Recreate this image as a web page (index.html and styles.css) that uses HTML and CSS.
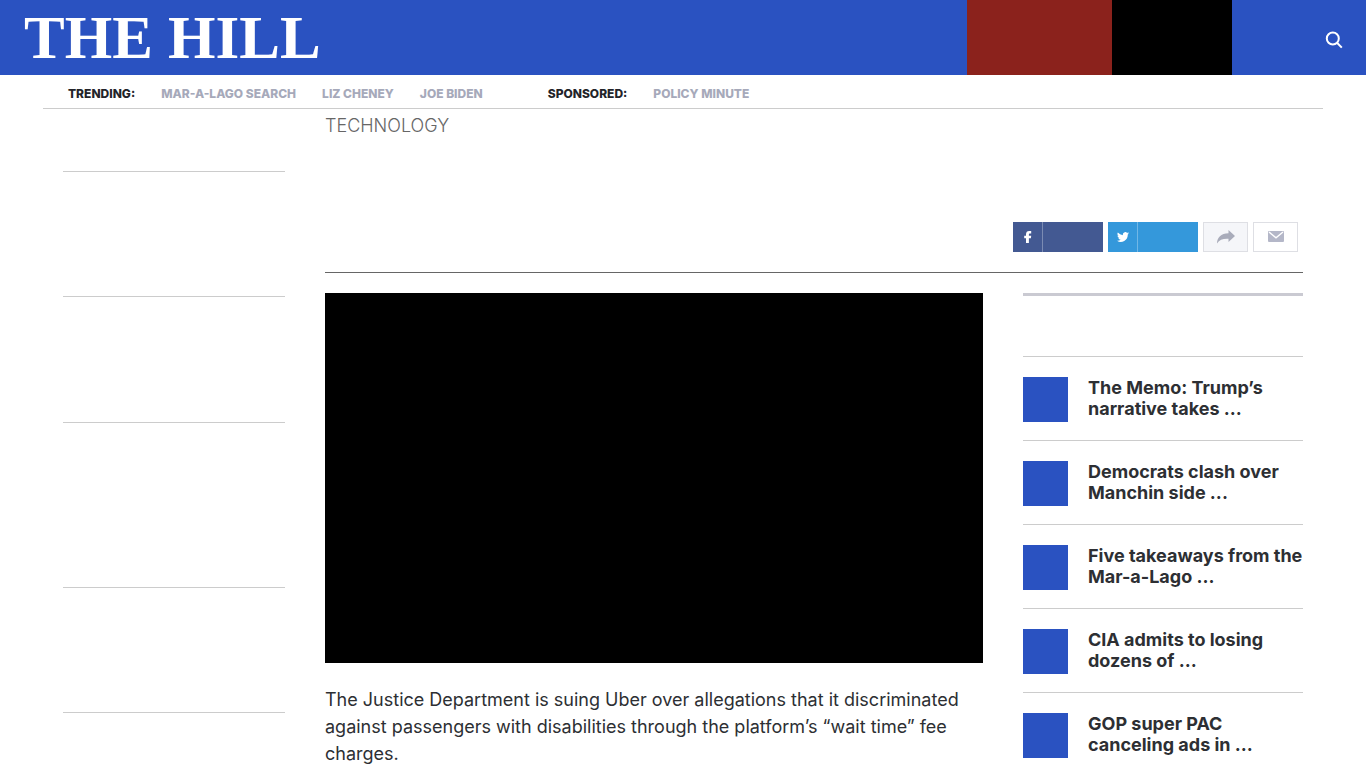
FILE: index.html
```html
<!DOCTYPE html>
<html lang="en">
<head>
<meta charset="utf-8">
<meta name="viewport" content="width=device-width, initial-scale=1">
<title>The Hill</title>
<link rel="stylesheet" href="styles.css">
</head>
<body>
<header class="header">
  <a class="logo" href="#">THE HILL</a>
  <a class="header-block header-red" href="#" aria-label="Watch live"></a>
  <a class="header-block header-black" href="#" aria-label="Subscribe"></a>
  <div class="header-search">
    <button class="search-button" type="button" aria-label="Search">
      <svg width="18" height="18" viewBox="0 0 18 18" fill="none" stroke="currentColor" stroke-width="2"><circle cx="7.8" cy="7.500" r="6"/><path d="M12 11.800l4.800 4.800"/></svg>
    </button>
  </div>
</header>
<div class="container">
  <nav class="trending" aria-label="Trending">
    <div class="trending-group">
      <span class="trending-label">TRENDING:</span>
      <a href="#">MAR-A-LAGO SEARCH</a>
      <a href="#">LIZ CHENEY</a>
      <a href="#">JOE BIDEN</a>
    </div>
    <div class="trending-group">
      <span class="trending-label">SPONSORED:</span>
      <a href="#">POLICY MINUTE</a>
    </div>
  </nav>
  <div class="layout">
    <aside class="rail">
      <div class="rail-item rail-first"></div>
      <div class="rail-item"></div>
      <div class="rail-item rail-third"></div>
      <div class="rail-item rail-tall"></div>
      <div class="rail-item"></div>
    </aside>
    <main class="content">
      <div class="article-head">
        <a class="category" href="#">TECHNOLOGY</a>
        <div class="share">
          <button class="share-button facebook" type="button" aria-label="Share on Facebook">
            <span class="share-icon"><svg width="8" height="13" viewBox="0 0 8 13" fill="currentColor"><path d="M2 12V7.300H.2V4.700H2V3.300C2 1.200 3.200 0 5.200 0h2v2.500H6c-.8 0-1.100.3-1.100 1v1.200h2.300l-.3 2.600h-2V12z"/></svg></span>
          </button>
          <button class="share-button twitter" type="button" aria-label="Share on Twitter">
            <span class="share-icon"><svg width="12" height="12" viewBox="0 0 24 24" fill="currentColor"><path d="M24 4.600a10 10 0 0 1-2.800.8 4.900 4.900 0 0 0 2.200-2.700 9.900 9.900 0 0 1-3.100 1.200 4.900 4.900 0 0 0-8.400 4.500A14 14 0 0 1 1.700 3.200a4.900 4.900 0 0 0 1.500 6.500A4.900 4.900 0 0 1 1 9.100a4.900 4.900 0 0 0 3.900 4.900 5 5 0 0 1-2.200.1 4.900 4.900 0 0 0 4.600 3.400A9.900 9.900 0 0 1 0 19.500 14 14 0 0 0 21.500 7.100 10 10 0 0 0 24 4.600z"/></svg></span>
          </button>
          <button class="share-button more" type="button" aria-label="More sharing options">
            <svg width="20" height="14" viewBox="0 0 20 14" fill="currentColor"><path d="M12.500 0L19 6l-6.500 6V8.800C7 8.500 3.500 9.800 1 13.500 1 7.500 5 3.300 12.500 3.200z"/></svg>
          </button>
          <button class="share-button email" type="button" aria-label="Share by email">
            <svg width="16" height="12" viewBox="0 0 16 12"><rect width="16" height="11" rx="1" fill="currentColor"/><path d="M1 1l7 5.800L15 1" fill="none" stroke="#fff" stroke-width="1.400"/></svg>
          </button>
        </div>
      </div>
      <div class="article-body">
        <article class="article">
          <div class="video"></div>
          <p class="paragraph">The Justice Department is suing Uber over allegations that it discriminated against passengers with disabilities through the platform’s “wait time” fee charges.</p>
        </article>
        <aside class="popular">
          <div class="popular-head"></div>
          <a class="popular-item" href="#"><span class="rank"></span><span class="popular-title">The Memo: Trump’s<br>narrative takes ...</span></a>
          <a class="popular-item" href="#"><span class="rank"></span><span class="popular-title">Democrats clash over<br>Manchin side ...</span></a>
          <a class="popular-item" href="#"><span class="rank"></span><span class="popular-title">Five takeaways from the<br>Mar-a-Lago ...</span></a>
          <a class="popular-item" href="#"><span class="rank"></span><span class="popular-title">CIA admits to losing<br>dozens of ...</span></a>
          <a class="popular-item" href="#"><span class="rank"></span><span class="popular-title">GOP super PAC<br>canceling ads in ...</span></a>
        </aside>
      </div>
    </main>
  </div>
</div>
</body>
</html>
```
FILE: styles.css
```css
* { box-sizing: border-box; }
body {
  margin: 0;
  background: #fff;
  color: #2d2f33;
  font-family: Inter, "Liberation Sans", sans-serif;
}
a { color: inherit; text-decoration: none; }
button { border: 0; padding: 0; cursor: pointer; }
svg { display: block; }

.header {
  display: flex;
  align-items: stretch;
  height: 75px;
  background: #2a52c1;
  color: #fff;
}
.logo {
  margin-right: auto;
  padding-left: 24px;
  font: bold 61px/76px "Liberation Serif", serif;
}
.header-red { width: 145px; background: #8b221c; }
.header-black { width: 120px; background: #000; }
.header-search {
  display: flex;
  align-items: center;
  justify-content: flex-end;
  width: 134px;
  padding: 4px 23px 0 0;
}
.search-button { background: none; color: #fff; }

.container { max-width: 1280px; margin: 0 auto; }
.trending {
  display: flex;
  gap: 65px;
  padding: 11px 25px 6px;
  border-bottom: 1px solid #ccc;
  color: #a6a9ba;
  font-size: 12px;
  font-weight: 800;
  line-height: 16px;
}
.trending-group { display: flex; gap: 26px; }
.trending-label { color: #232429; }

.layout {
  display: grid;
  grid-template-columns: 222px minmax(0, 1fr);
  gap: 40px;
  padding: 0 20px;
}
.rail-item { height: 125px; border-bottom: 1px solid #ccc; }
.rail-first { height: 63px; }
.rail-third { height: 126px; }
.rail-tall { height: 165px; }

.article-head { border-bottom: 1px solid #666; }
.category {
  display: block;
  padding-top: 5px;
  color: #666;
  font-size: 18px;
  font-weight: 300;
  line-height: 24px;
}
.share {
  display: flex;
  justify-content: flex-end;
  gap: 5px;
  padding: 84px 5px 20px 0;
}
.share-button {
  display: flex;
  align-items: center;
  justify-content: center;
  width: 45px;
  height: 30px;
  color: #b4b7c8;
}
.facebook, .twitter { justify-content: flex-start; width: 90px; color: #fff; }
.facebook { background: #435992; }
.twitter { background: #3498db; }
.share-icon {
  display: flex;
  align-items: center;
  justify-content: center;
  width: 30px;
  height: 30px;
  border-right: 1px solid rgba(255, 255, 255, 0.3);
}
.more { border: 1px solid #dedfe4; background: #f5f6f9; color: #a9acba; }
.email { border: 1px solid #dedfe4; background: #fff; }

.article-body {
  display: grid;
  grid-template-columns: minmax(0, 1fr) 280px;
  gap: 40px;
  padding-top: 20px;
}
.video { aspect-ratio: 16 / 9; background: #000; }
.paragraph { margin: 23px 0; font-size: 18px; line-height: 27px; font-weight: 400; }

.popular-head {
  height: 64px;
  border-top: 3px solid #cacad2;
  border-bottom: 1px solid #ccc;
}
.popular-item {
  display: flex;
  align-items: flex-start;
  gap: 20px;
  height: 84px;
  padding-top: 20px;
  border-bottom: 1px solid #ccc;
}
.rank { flex: none; width: 45px; height: 45px; background: #2a52c1; }
.popular-title { font-size: 18px; font-weight: 700; line-height: 21px; white-space: nowrap; }
```
